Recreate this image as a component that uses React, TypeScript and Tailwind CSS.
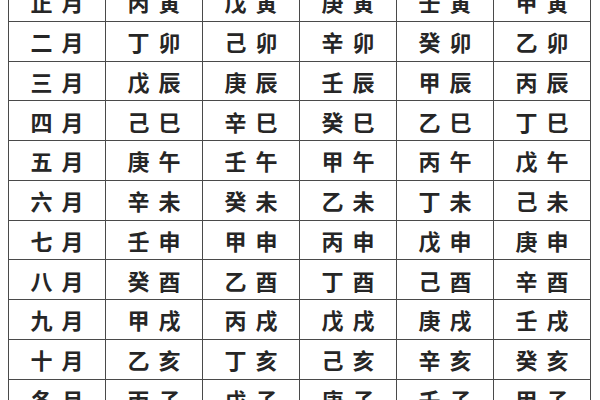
const rows: string[][] = [
  ["正月", "丙寅", "戊寅", "庚寅", "壬寅", "甲寅"],
  ["二月", "丁卯", "己卯", "辛卯", "癸卯", "乙卯"],
  ["三月", "戊辰", "庚辰", "壬辰", "甲辰", "丙辰"],
  ["四月", "己巳", "辛巳", "癸巳", "乙巳", "丁巳"],
  ["五月", "庚午", "壬午", "甲午", "丙午", "戊午"],
  ["六月", "辛未", "癸未", "乙未", "丁未", "己未"],
  ["七月", "壬申", "甲申", "丙申", "戊申", "庚申"],
  ["八月", "癸酉", "乙酉", "丁酉", "己酉", "辛酉"],
  ["九月", "甲戌", "丙戌", "戊戌", "庚戌", "壬戌"],
  ["十月", "乙亥", "丁亥", "己亥", "辛亥", "癸亥"],
  ["冬月", "丙子", "戊子", "庚子", "壬子", "甲子"],
];

export default function App() {
  return (
    <div className="w-[600px] h-[400px] overflow-hidden bg-white">
      <div
        className="ml-[8px] -mt-[19px] w-[583px] border-l border-t border-[#4a4a4a]"
        style={{ fontFamily: '"Noto Sans CJK SC", "Noto Sans", sans-serif' }}
      >
        {rows.map((r, i) => (
          <div key={i} className="grid grid-cols-[repeat(6,97px)] h-[39.75px] border-b border-[#4a4a4a]">
            {r.map((c, j) => (
              <div
                key={j}
                className="flex items-center justify-center gap-[9px] border-r border-[#4a4a4a] text-[22px] font-bold leading-none text-[#262626]"
              >
                <span>{c[0]}</span>
                <span>{c[1]}</span>
              </div>
            ))}
          </div>
        ))}
      </div>
    </div>
  );
}
